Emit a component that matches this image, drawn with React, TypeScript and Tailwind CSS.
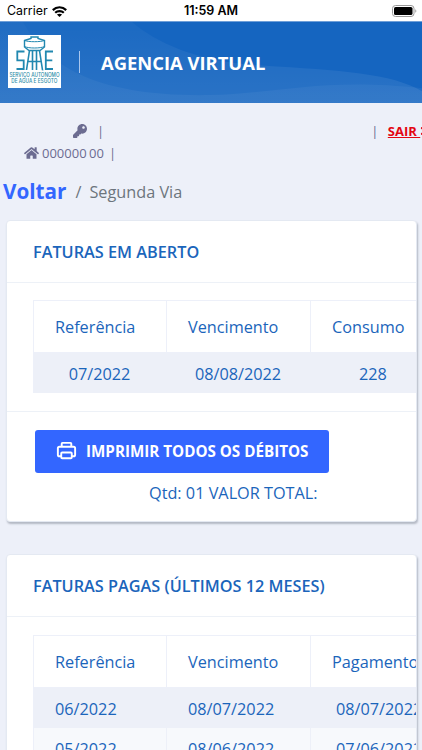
import React from 'react';
import { FaHome, FaKey, FaTimes } from 'react-icons/fa';

const openInvoices = [['07/2022', '08/08/2022', '228']];

const paidInvoices = [
  ['06/2022', '08/07/2022', '08/07/2022'],
  ['05/2022', '08/06/2022', '07/06/2022'],
];

const StatusBar: React.FC = () => (
  <div className="h-[21px] shrink-0 bg-white flex items-center justify-between pl-[7px] pr-[5px] text-black font-['Inter',sans-serif]">
    <div className="flex-1 flex items-center gap-[4px] pt-px text-[12.4px] leading-none">
      <span>Carrier</span>
      <svg className="w-[15px] h-[11px]" viewBox="0 0 15 11" fill="none" stroke="currentColor" strokeWidth="2.2">
        <path d="M.8 4.1C4.6.3 10.4.3 14.2 4.1M3.2 6.8c2.4-2.3 6.2-2.3 8.6 0" />
        <path d="M7.5 11 4.9 8.6c1.5-1.3 3.7-1.3 5.2 0z" fill="currentColor" stroke="none" />
      </svg>
    </div>
    <span className="pt-[2px] pr-[2px] text-[12.5px] leading-none font-semibold">11:59 AM</span>
    <div className="flex-1 flex justify-end">
      <svg className="w-[25px] h-[12px]" viewBox="0 0 25 12">
        <rect x=".5" y=".5" width="21.5" height="11" rx="3" fill="none" stroke="#999" />
        <rect x="2" y="2" width="18.5" height="8" rx="1.6" fill="#000" />
        <path d="M23.3 4.2c1.4.6 1.4 3 0 3.6z" fill="#999" />
      </svg>
    </div>
  </div>
);

const Logo: React.FC = () => (
  <svg className="w-[53px] h-[53px] shrink-0" viewBox="0 0 53 53">
    <rect width="53" height="53" fill="#fff" />
    <g fill="none" stroke="#2188b0" strokeWidth="1.8">
      <path d="M16.5 5.5 23 3.5V2h7v1.5l6.5 2V12L32 15.5H21L16.5 12z" strokeWidth="1.4" />
      <path d="M16.5 5.5c4 1.6 16 1.6 20 0M16.5 11.5c4 2 16 2 20 0" strokeWidth="1" />
      <path d="M16.5 16.5H9.3v8.8h6.4V34H8.5" />
      <path d="M21.5 15.5 18.500 35M31.500 15.500 34.500 35M24.500 16v19M28.500 16v19M19.500 26.500h14" strokeWidth="1.6" />
      <path d="M45 16.5h-7.2V34H45M38 25.3h6.3" />
    </g>
    <g fill="#2a8ba6" fontFamily="Inter, sans-serif" fontSize="5.6" fontWeight="500">
      <text x="1.5" y="42.2" textLength="50" lengthAdjust="spacingAndGlyphs">SERVIÇO AUTÔNOMO</text>
      <text x="3.3" y="47.7" textLength="46" lengthAdjust="spacingAndGlyphs">DE AGUA E ESGOTO</text>
    </g>
  </svg>
);

const Header: React.FC = () => (
  <header className="relative h-[82px] shrink-0 overflow-hidden bg-[#1565c0] border-t border-[#6f9fd8]">
    <svg className="absolute inset-0 w-full h-full" viewBox="0 0 422 82" preserveAspectRatio="none">
      <defs>
        <linearGradient id="wave" x1="0" y1="0" x2="0" y2="1">
          <stop offset="0" stopColor="#fff" stopOpacity=".03" />
          <stop offset="1" stopColor="#fff" stopOpacity=".09" />
        </linearGradient>
        <linearGradient id="swell" x1="0" y1="0" x2="0" y2="1">
          <stop offset="0" stopColor="#fff" stopOpacity=".02" />
          <stop offset="1" stopColor="#fff" stopOpacity=".05" />
        </linearGradient>
      </defs>
      <path d="M0 0h132c24 21 67 41 130 44 78 5 130 8 160 26v12H0z" fill="url(#wave)" />
      <path d="M0 0h23c24 46 77 76 187 74 70-2 115-18 212-7v15H0z" fill="url(#swell)" />
    </svg>
    <div className="relative flex items-center h-full pl-[7.5px] pb-[2px]">
      <Logo />
      <div className="w-px h-[22px] ml-[18px] bg-[#a8c6ee]" />
      <h1 className="ml-[21.5px] pt-[3px] text-[18.4px] font-bold text-white whitespace-nowrap">AGENCIA VIRTUAL</h1>
    </div>
  </header>
);

const PrintIcon: React.FC = () => (
  <svg className="w-[23px] h-[23px] shrink-0" viewBox="0 0 24 24" fill="currentColor">
    <path d="M19.36 7H18V5a1.92 1.92 0 0 0-1.83-2H7.83A1.92 1.92 0 0 0 6 5v2H4.64A2.66 2.66 0 0 0 2 9.67v6.66A2.66 2.66 0 0 0 4.64 19h.86a2 2 0 0 0 2 2h9a2 2 0 0 0 2-2h.86A2.66 2.66 0 0 0 22 16.33V9.67A2.66 2.66 0 0 0 19.36 7zM8 5h8v2H8zm-.5 14v-4h9v4zM20 16.33a.66.66 0 0 1-.64.67h-.86v-2a2 2 0 0 0-2-2h-9a2 2 0 0 0-2 2v2h-.86a.66.66 0 0 1-.64-.67V9.67A.66.66 0 0 1 4.64 9h14.72a.66.66 0 0 1 .64.67z" />
  </svg>
);

interface InvoiceTableProps {
  columns: string[];
  rows: string[][];
  centered?: boolean;
}

const InvoiceTable: React.FC<InvoiceTableProps> = ({ columns, rows, centered }) => (
  <div className="pl-[26px] overflow-hidden">
    <table className="w-[430px] table-fixed border-separate border-spacing-0 border-l border-t border-[#edf0f9]">
      <colgroup>
        <col className="w-[133px]" />
        <col className="w-[144px]" />
        <col />
      </colgroup>
      <thead>
        <tr className="h-[52px]">
          {columns.map((column) => (
            <th key={column} className="p-0 pt-px pl-[21px] border-r border-b border-[#edf0f9] text-left font-normal">{column}</th>
          ))}
        </tr>
      </thead>
      <tbody>
        {rows.map((row, i) => (
          <tr key={row[0]} className={i % 2 === 0 ? 'h-[40px] bg-[#edf0f8]' : 'h-[40px] bg-[#f7f9fc]'}>
            {row.map((cell, j) => (
              <td
                key={j}
                className={`p-0 pt-px border-r border-[#edf0f8] ${centered ? (j === 2 ? 'pl-[48px]' : 'pr-px text-center') : j === 2 ? 'pl-[25px]' : 'pl-[21px]'}`}
              >
                {cell}
              </td>
            ))}
          </tr>
        ))}
      </tbody>
    </table>
  </div>
);

const Card: React.FC<{ title: string; className?: string; children: React.ReactNode }> = ({ title, className, children }) => (
  <section className={`ml-[6px] w-[411px] shrink-0 bg-white rounded-[4px] border border-[#e4e9f2] shadow-[1px_2px_2px_#b4b9c4] overflow-hidden ${className}`}>
    <h2 className="h-[62px] flex items-center pl-[26px] border-b border-[#edf1f7] text-[16.27px] font-semibold whitespace-nowrap">{title}</h2>
    {children}
  </section>
);

const App: React.FC = () => {
  return (
    <div className="h-[750px] w-[422px] overflow-hidden flex flex-col bg-[#edf0f9] text-[16.25px] leading-[24px] text-[#1b65bb] font-['Open_Sans',sans-serif]">
      <StatusBar />
      <Header />

      <div className="h-[74px] shrink-0 pt-[17px] text-[13px] leading-[22px] text-[#6c6c91]">
        <div className="flex items-center pl-[73px] whitespace-nowrap">
          <FaKey className="w-[14px] h-[14px] shrink-0" />
          <span className="ml-[10px]">|</span>
          <span className="ml-[267px]">|</span>
          <a href="#" className="ml-[9.5px] flex items-center font-bold text-[#e30613]">
            <span className="underline whitespace-pre">SAIR </span>
            <FaTimes className="w-[12px] h-[12px] -ml-[1.5px] shrink-0" />
          </a>
        </div>
        <div className="flex items-center pl-[24px]">
          <FaHome className="w-[15px] h-[14px] shrink-0" />
          <span className="ml-[3px]">000000</span>
          <span className="ml-[2.5px]">00</span>
          <span className="ml-[5px]">|</span>
        </div>
      </div>

      <nav className="h-[43px] shrink-0 flex items-center pl-[3px] pb-[14px] text-[#6c757d] whitespace-nowrap">
        <a href="#" className="pb-px text-[20.7px] font-bold text-[#3366ff]">Voltar</a>
        <span className="ml-[9px]">/</span>
        <span className="ml-[8px]">Segunda Via</span>
      </nav>

      <Card title="FATURAS EM ABERTO" className="h-[302px]">
        <div className="pt-[17px] h-[129px] border-b border-[#edf1f7]">
          <InvoiceTable columns={['Referência', 'Vencimento', 'Consumo']} rows={openInvoices} centered />
        </div>
        <div className="pt-[17.5px] pl-[28px]">
          <button className="w-[294px] h-[43px] pl-[20px] pb-px flex items-center rounded-[3px] bg-[#3366ff] text-white text-[15.2px] font-bold whitespace-nowrap">
            <PrintIcon />
            <span className="ml-[8px]">IMPRIMIR TODOS OS DÉBITOS</span>
          </button>
          <p className="mt-[8.5px] pl-[114px]">Qtd: 01 VALOR TOTAL:</p>
        </div>
      </Card>

      <Card title="FATURAS PAGAS (ÚLTIMOS 12 MESES)" className="mt-[32px] h-[420px]">
        <div className="pt-[18px]">
          <InvoiceTable columns={['Referência', 'Vencimento', 'Pagamento']} rows={paidInvoices} />
        </div>
      </Card>
    </div>
  );
};

export default App;
